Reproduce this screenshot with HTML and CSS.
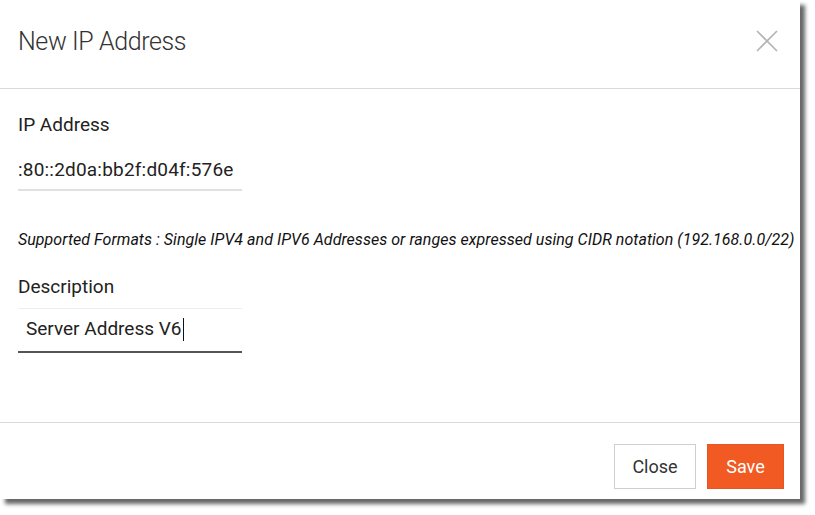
FILE: index.html
```html
<!DOCTYPE html>
<html>
<head>
<meta charset="utf-8">
<link rel="stylesheet" href="styles.css">
</head>
<body>
<div class="dialog">
  <div class="dlg-header">
    <h1 class="dlg-title">New IP Address</h1>
    <button class="dlg-close" aria-label="Close">
      <svg width="22" height="22" viewBox="0 0 22 22"><path d="M1 1 L21 21 M21 1 L1 21" stroke="#b3b3b3" stroke-width="1.6" fill="none"/></svg>
    </button>
  </div>
  <div class="dlg-body">
    <label class="field-label">IP Address</label>
    <div class="field-input ip-input"><span class="ip-text">:80::2d0a:bb2f:d04f:576e</span></div>
    <p class="hint">Supported Formats : Single IPV4 and IPV6 Addresses or ranges expressed using CIDR notation (192.168.0.0/22)</p>
    <label class="field-label desc-label">Description</label>
    <div class="field-input desc-input"><span>Server Address V6</span><span class="caret"></span></div>
  </div>
  <div class="dlg-footer">
    <button class="btn btn-close">Close</button>
    <button class="btn btn-save">Save</button>
  </div>
</div>
</body>
</html>
```
FILE: styles.css
```css
* { box-sizing: border-box; }
html, body { margin: 0; padding: 0; background: #fff; }
body { font-family: Roboto, "Liberation Sans", sans-serif; color: #222; padding-bottom: 12px; }

.dialog {
  width: 800px;
  height: 499px;
  background: #fff;
  box-shadow: 5px 5px 4px rgba(0,0,0,0.6);
  display: flex;
  flex-direction: column;
}

.dlg-header {
  height: 89px;
  border-bottom: 1px solid #d9d9d9;
  display: flex;
  align-items: center;
  justify-content: space-between;
  padding: 0 22px 6px 18px;
}
.dlg-title {
  margin: 0;
  font-size: 25px;
  font-weight: 300;
  color: #333;
  letter-spacing: -0.4px;
}
.dlg-close {
  border: 0;
  background: none;
  padding: 0;
  width: 22px;
  height: 22px;
  display: flex;
}

.dlg-body {
  flex: 1;
  padding: 25px 18px 0 18px;
}
.field-label {
  display: block;
  font-size: 19px;
  color: #222;
  line-height: 22px;
}
.field-input {
  width: 224px;
  font-size: 19px;
  line-height: 22px;
  color: #222;
}
.ip-input {
  margin-top: 12px;
  height: 43px;
  padding-top: 11px;
  border-bottom: 2px solid #e0e0e0;
  white-space: nowrap;
  letter-spacing: 0.2px;
}
.ip-text { display: inline-block; }

.hint {
  margin: 39px 0 0 0;
  font-size: 16px;
  font-style: italic;
  line-height: 19px;
  color: #111;
  white-space: nowrap;
  letter-spacing: 0.04px;
}

.desc-label { margin-top: 27px; }
.desc-input {
  margin-top: 10px;
  height: 45px;
  border-top: 1px solid #eeeeee;
  border-bottom: 2px solid #555;
  padding: 9px 0 0 8px;
  display: flex;
  align-items: flex-start;
}
.caret {
  display: inline-block;
  width: 1px;
  height: 23px;
  background: #111;
  margin-left: 1px;
}

.dlg-footer {
  height: 77px;
  border-top: 1px solid #d9d9d9;
  display: flex;
  justify-content: flex-end;
  align-items: flex-start;
  gap: 11px;
  padding: 21px 16px 0 0;
}
.btn {
  height: 45px;
  font-family: Roboto, "Liberation Sans", sans-serif;
  font-size: 18px;
  padding: 0;
  cursor: pointer;
}
.btn-close {
  width: 82px;
  background: #fff;
  color: #333;
  border: 1px solid #cfcfcf;
}
.btn-save {
  width: 77px;
  background: #f15a22;
  color: #fff;
  border: 1px solid #e85520;
}
```
